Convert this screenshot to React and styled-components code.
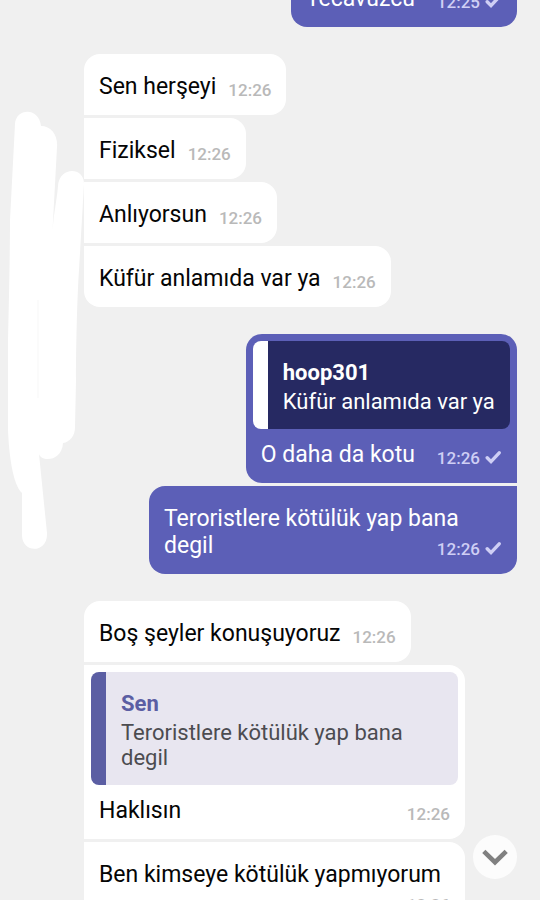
import React, { useLayoutEffect, useRef } from "react";
import styled, { createGlobalStyle, css } from "styled-components";

const GlobalStyle = createGlobalStyle`
  * {
    box-sizing: border-box;
  }

  body {
    margin: 0;
    background: #f0f0f0;
    font-family: Roboto, sans-serif;
  }
`;

const Screen = styled.main`
  position: relative;
  height: 100vh;
  overflow: hidden;
`;

const Thread = styled.div`
  height: 100%;
  overflow-y: auto;
  scrollbar-width: none;
  display: flex;
  flex-direction: column;
  gap: 27px;
  padding: 0 23px 23px 84px;
`;

//messages sent one after the other by the same person sit close together
const Group = styled.div`
  flex: none;
  display: flex;
  flex-direction: column;
  gap: 3px;
  align-items: ${({ $own }) => ($own ? "flex-end" : "flex-start")};
  padding-left: ${({ $own }) => ($own ? "65px" : "0")};
  padding-right: ${({ $own }) => ($own ? "0" : "52px")};
`;

const incoming = css`
  background: #fff;
  color: #050505;
  border-radius: 0 16px 16px 0;

  &:first-child {
    border-top-left-radius: 16px;
  }
  &:last-child {
    border-bottom-left-radius: 16px;
  }
`;

const outgoing = css`
  background: #5c5fb7;
  color: #fff;
  border-radius: 16px 0 0 16px;

  &:first-child {
    border-top-right-radius: 16px;
  }
  &:last-child {
    border-bottom-right-radius: 16px;
  }
`;

const Bubble = styled.article`
  max-width: 100%;
  ${({ $own }) => ($own ? outgoing : incoming)}
  padding: ${({ $quoted }) => ($quoted ? "7px 7px 15px" : "19px 0 15px")};
`;

//flow-root keeps the floated time inside the bubble
const Body = styled.div`
  display: flow-root;
  padding: ${({ $quoted }) => ($quoted ? "12px 8px 0" : "0 15px")};
  font-size: 23px;
  line-height: 27px;
`;

const Meta = styled.span`
  float: right;
  display: flex;
  align-items: flex-end;
  gap: 5px;
  height: 27px;
  margin-left: ${({ $own }) => ($own ? "22px" : "12px")};
  color: ${({ $own }) => ($own ? "#cfcff5" : "#b9b9b9")};
  font-size: 17px;
  font-weight: 500;
  line-height: 20px;
`;

const Quote = styled.blockquote`
  margin: 0;
  padding: 19px 15px 15px;
  border-left: 15px solid ${({ $own }) => ($own ? "#fff" : "#5b5ea3")};
  border-radius: 8px;
  background: ${({ $own }) => ($own ? "#262962" : "#e8e6f0")};
  color: ${({ $own }) => ($own ? "#fff" : "#4c4c50")};
  font-size: 22px;
  line-height: 25px;
`;

const Author = styled.strong`
  display: block;
  margin-bottom: 4px;
  color: ${({ $own }) => ($own ? "#fff" : "#5b5ea3")};
  font-weight: 700;
`;

const Marker = styled.svg`
  position: absolute;
  top: 0;
  left: 0;
  pointer-events: none;
`;

const ScrollDown = styled.button`
  position: absolute;
  right: 23px;
  bottom: 21px;
  width: 44px;
  height: 44px;
  padding: 0;
  border: 0;
  border-radius: 50%;
  background: #fcfcfc;
  display: grid;
  place-items: center;
  cursor: pointer;
`;

const Check = () => (
  <svg width="17" height="20" viewBox="0 0 17 20" aria-hidden="true">
    <path d="M2.2 9.8 6 13.6 14.2 4.8" fill="none" stroke="currentColor" strokeWidth="3.4" strokeLinecap="round" />
  </svg>
);

const Message = ({ own, text, time, quote }) => (
  <Bubble $own={own} $quoted={!!quote}>
    {quote && (
      <Quote $own={own}>
        <Author $own={own}>{quote.author}</Author>
        {quote.text}
      </Quote>
    )}
    <Body $quoted={!!quote}>
      {text}
      <Meta $own={own}>
        <time>{time}</time>
        {own && <Check />}
      </Meta>
    </Body>
  </Bubble>
);

const groups = [
  { own: true, messages: [{ text: "Tecavüzcü", time: "12:25" }] },
  {
    own: false,
    messages: [
      { text: "Sen herşeyi", time: "12:26" },
      { text: "Fiziksel", time: "12:26" },
      { text: "Anlıyorsun", time: "12:26" },
      { text: "Küfür anlamıda var ya", time: "12:26" },
    ],
  },
  {
    own: true,
    messages: [
      { text: "O daha da kotu", time: "12:26", quote: { author: "hoop301", text: "Küfür anlamıda var ya" } },
      { text: "Teroristlere kötülük yap bana degil", time: "12:26" },
    ],
  },
  {
    own: false,
    messages: [
      { text: "Boş şeyler konuşuyoruz", time: "12:26" },
      { text: "Haklısın", time: "12:26", quote: { author: "Sen", text: "Teroristlere kötülük yap bana degil" } },
      { text: "Ben kimseye kötülük yapmıyorum", time: "12:26" },
    ],
  },
];

const App = () => {
  const thread = useRef(null);

  //open with the first message partly scrolled away
  useLayoutEffect(() => {
    thread.current.scrollTop = 34;
  }, []);

  const toBottom = () => {
    thread.current.scrollTo({ top: thread.current.scrollHeight, behavior: "smooth" });
  };

  return (
    <>
      <GlobalStyle />
      <Screen>
        <Thread ref={thread}>
          {groups.map((group, i) => (
            <Group key={i} $own={group.own}>
              {group.messages.map((message, j) => (
                <Message key={j} own={group.own} {...message} />
              ))}
            </Group>
          ))}
        </Thread>
        <Marker width="90" height="560" viewBox="0 0 90 560" aria-hidden="true">
          <path
            fill="#fff"
            d="M15 124C16 108 39 107 41 126C51 126 58 135 57 147L52 240C53 215 57 200 58 186C59 167 84 166 84 184L79 270C77 300 76 350 76 380L75 427C75 436 70 442 63 443C62 462 41 462 39 454L47 533C48 553 23 554 22 536L22 493C13 485 9 455 8 430V340C9 300 10 250 10 220Z"
          />
          <path d="M38 300V398" stroke="#f7f7f7" />
        </Marker>
        <ScrollDown type="button" aria-label="Scroll to latest" onClick={toBottom}>
          <svg width="26" height="18" viewBox="0 0 26 18" aria-hidden="true">
            <path d="M1.8 3.4 13 14.2 24.2 3.4" fill="none" stroke="#808080" strokeWidth="4.6" />
          </svg>
        </ScrollDown>
      </Screen>
    </>
  );
};

export default App;
